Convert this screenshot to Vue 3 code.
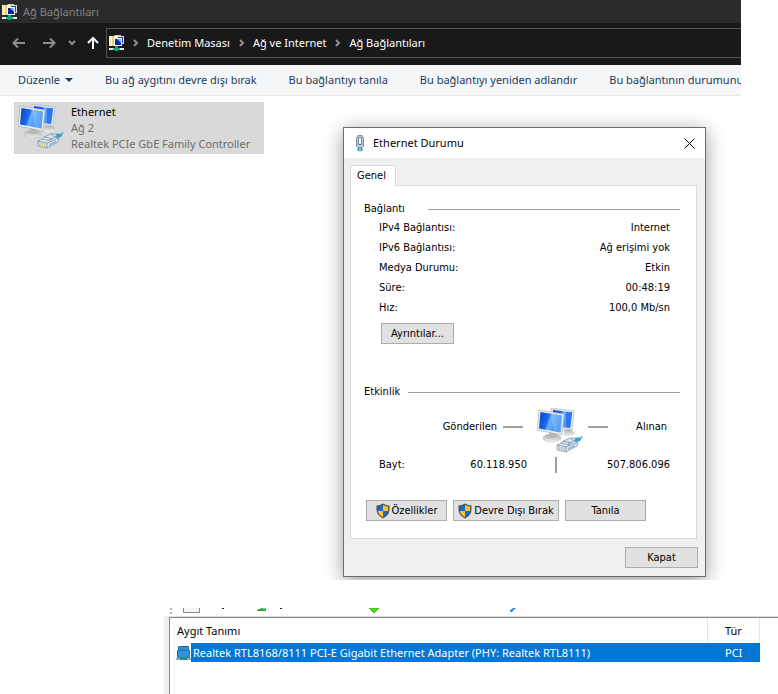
<template>
  <div class="page">
    <!-- network connections window -->
    <section class="explorer">
      <header class="titlebar">
        <svg class="net-icon" viewBox="0 0 16 16"><use href="#net-folder" /></svg>
        <span>Ağ Bağlantıları</span>
      </header>

      <nav class="navbar">
        <button class="nav-btn back" aria-label="Geri">
          <svg width="14" height="12" viewBox="0 0 14 12"><path d="M13 6H1.5M6 1.5L1.5 6L6 10.5" /></svg>
        </button>
        <button class="nav-btn forward" aria-label="İleri">
          <svg width="14" height="12" viewBox="0 0 14 12"><path d="M1 6H12.5M8 1.5L12.5 6L8 10.5" /></svg>
        </button>
        <button class="nav-btn recent" aria-label="Son konumlar">
          <svg width="8" height="6" viewBox="0 0 8 6"><path d="M1 1L4 4L7 1" /></svg>
        </button>
        <button class="nav-btn up" aria-label="Yukarı">
          <svg width="12" height="14" viewBox="0 0 12 14"><path d="M6 13V2M1 7L6 2L11 7" /></svg>
        </button>
        <div class="address">
          <svg class="net-icon" viewBox="0 0 16 16"><use href="#net-folder" /></svg>
          <template v-for="crumb in crumbs" :key="crumb">
            <svg class="sep" viewBox="0 0 6 8"><path d="M1 1L4 4L1 7" /></svg>
            <a href="#" @click.prevent>{{ crumb }}</a>
          </template>
        </div>
      </nav>

      <div class="toolbar">
        <button class="tool organize">
          Düzenle
          <svg width="8" height="4" viewBox="0 0 8 4"><path d="M0 0H8L4 4Z" /></svg>
        </button>
        <button v-for="t in tools" :key="t" class="tool">{{ t }}</button>
      </div>

      <div class="content">
        <div class="adapter">
          <svg class="monitors" viewBox="0 0 46 46"><use href="#monitors" /></svg>
          <div class="adapter-text">
            <div class="name">Ethernet</div>
            <div>Ağ 2</div>
            <div>Realtek PCIe GbE Family Controller</div>
          </div>
        </div>

        <div class="dialog" role="dialog" aria-labelledby="dlg-title">
          <header class="dialog-title">
            <svg class="plug" viewBox="0 0 10 17">
              <path d="M1.500 2.500L3 .5H7L8.500 2.500V11L7 12.500H3L1.500 11Z" fill="#c3cddd" stroke="#7f8ca3" />
              <rect x="3.500" y="2.500" width="3" height="7" fill="#f3f6fa" stroke="#75849b" />
              <path d="M3.500 13V16M6.500 13V16" stroke="#1b9bd0" stroke-width="2" />
              <path d="M5 13V17" stroke="#79d4f2" />
            </svg>
            <h1 id="dlg-title">Ethernet Durumu</h1>
            <button class="close" aria-label="Kapat">
              <svg width="11" height="11" viewBox="0 0 11 11"><path d="M.5 .5L10.5 10.5M10.5 .5L.5 10.5" /></svg>
            </button>
          </header>

          <div class="dialog-body">
            <button class="tab">Genel</button>
            <div class="panel">
              <h2 class="group-title"><span class="wide">Bağlantı</span></h2>
              <dl class="rows">
                <div v-for="row in rows" :key="row.label" class="row">
                  <dt>{{ row.label }}</dt>
                  <dd>{{ row.value }}</dd>
                </div>
              </dl>
              <button class="btn details">Ayrıntılar...</button>

              <h2 class="group-title"><span>Etkinlik</span></h2>
              <div class="activity">
                <div class="sent">Gönderilen<i class="dash"></i></div>
                <svg class="monitors" viewBox="0 0 46 46"><use href="#monitors" /></svg>
                <i class="dash"></i>
                <span class="received">Alınan</span>
              </div>
              <div class="bytes">
                <span>Bayt:</span>
                <span class="sent-bytes">60.118.950</span>
                <i class="bar"></i>
                <span class="received-bytes">507.806.096</span>
              </div>
              <div class="actions">
                <button class="btn props"><svg class="shield" viewBox="0 0 14 16"><use href="#shield" /></svg>Özellikler</button>
                <button class="btn disable"><svg class="shield" viewBox="0 0 14 16"><use href="#shield" /></svg>Devre Dışı Bırak</button>
                <button class="btn diagnose">Tanıla</button>
              </div>
            </div>
            <button class="btn ok">Kapat</button>
          </div>
        </div>
      </div>
    </section>

    <!-- device list -->
    <section class="devices">
      <div class="strip">
        <svg width="360" height="8" viewBox="0 0 360 8">
          <path d="M6 0h2v2h-2zM6 4h2v2h-2z" fill="#b5b5b5" />
          <path d="M19.500 0V4.500H35.500V0" fill="#f5f5f5" stroke="#8a8a8a" />
          <path d="M58 0h2v1h-2zM116 0h2v1h-2z" fill="#222" />
          <path d="M93 2L98 0H102V3H93Z" fill="#2d9e35" />
          <path d="M98 0H102L100 2Z" fill="#8ce08c" />
          <path d="M205 0H215L210 5Z" fill="#55d820" stroke="#3bb512" />
          <path d="M346 4L346 2L349 0H352L348 4Z" fill="#3f8fe0" />
        </svg>
      </div>
      <div class="list">
        <table>
          <thead>
            <tr>
              <th colspan="2" class="col-name">Aygıt Tanımı</th>
              <th class="col-type">Tür</th>
            </tr>
          </thead>
          <tbody>
            <tr v-for="d in devices" :key="d.name">
              <td class="dev-icon">
                <svg width="15" height="16" viewBox="0 0 15 16">
                  <path d="M2.500 1.500H12.500V5.500H2.500Z" fill="#2f8fd0" stroke="#1a6fae" />
                  <path d="M1.500 5.500H13.500V12.500H1.500Z" fill="#2f96dc" stroke="#1b74b5" />
                  <path d="M0 13H15V15H0Z" fill="#7fb3d3" />
                  <path d="M4 12H11V15H4Z" fill="#2b8f80" />
                </svg>
              </td>
              <td class="dev-name">{{ d.name }}</td>
              <td class="dev-type">{{ d.type }}</td>
            </tr>
          </tbody>
        </table>
      </div>
    </section>

    <!-- shared icons -->
    <svg class="defs" width="0" height="0" aria-hidden="true">
      <defs>
        <linearGradient id="screen" x1="0" y1="0" x2="1" y2="0.300">
          <stop offset="0" stop-color="#0a3fc4" />
          <stop offset="0.450" stop-color="#1c6cf0" />
          <stop offset="0.550" stop-color="#6db4fb" />
          <stop offset="1" stop-color="#2f80f2" />
        </linearGradient>
        <linearGradient id="stand" x1="0" y1="0" x2="0" y2="1">
          <stop offset="0" stop-color="#a9a9a9" />
          <stop offset="1" stop-color="#f0f0f0" />
        </linearGradient>
        <symbol id="net-folder" viewBox="0 0 16 16">
          <path d="M0 1H5L6 0H12V11H0Z" fill="#f0cf6c" />
          <path d="M0 1H3V11H0Z" fill="#fbeeb8" />
          <path d="M5 1H9V3H5Z" fill="#fdf3cc" />
          <rect x="8.500" y="1.500" width="6" height="7" fill="#1c3fd0" stroke="#d9dde6" />
          <rect x="5.500" y="3.500" width="7" height="7" fill="#0b24b4" stroke="#f4f5f8" />
          <path d="M8 4H12V8Z" fill="#7db0f8" />
          <path d="M0 13H15V15H0Z" fill="#e3e8ea" />
          <path d="M4 13H11V15H4Z" fill="#14c07a" />
          <path d="M6 11H9V16H6Z" fill="#0fa765" />
        </symbol>
        <symbol id="monitors" viewBox="0 0 46 46">
          <path d="M27 22L33 21L38 25L35 28H27Z" fill="url(#stand)" />
          <path d="M14 0L37 3L35 22L15 20Z" fill="#e2e4e7" stroke="#aeb2b8" stroke-width=".6" />
          <path d="M16 2L35 4.500L33 20L17 18Z" fill="url(#screen)" />
          <path d="M29 4L35 4.500L33 20L29 19Z" fill="#2a77ee" />
          <ellipse cx="15" cy="30" rx="9" ry="4" fill="url(#stand)" stroke="#bcbcbc" stroke-width=".5" />
          <path d="M12 24H20L19 30H12Z" fill="#b9b9b9" />
          <path d="M2 2L27 6L25 27L0 22Z" fill="#eceef0" stroke="#a4a8ae" stroke-width=".6" />
          <path d="M3.500 4L25 7.500L23.500 24.500L2 20.500Z" fill="url(#screen)" />
          <path d="M14 6L25 7.500L23.500 24.500L17 23.500Z" fill="#a4d2ff" opacity=".4" />
          <path d="M34 32Q40 29 46 28L43 33Q40 33 36 36Z" fill="#2ea3d2" />
          <path d="M39 30L46 28L43 30Z" fill="#a8e4f5" />
          <path d="M20 37L24 35L26 33L33 30L39 30L37 33L41 34L40 38L29 44L20 42Z" fill="#dbe6f1" stroke="#7890ad" stroke-width=".7" />
          <path d="M20 37L29 39V44M29 39L41 34M24 35L33 37M26 33L35 35M33 30L37 33L31 36" fill="none" stroke="#6f87a5" stroke-width=".7" />
          <path d="M31 40L38 36.500V38.500L31 42Z" fill="#9db8d6" />
          <path d="M22 38.500V42M24.500 39V43M27 39.500V43" stroke="#c9b85c" />
        </symbol>
        <symbol id="shield" viewBox="0 0 14 16">
          <path d="M7 .5Q4 2.500 .5 2.500V7Q1 12.500 7 15.500Q13 12.500 13.500 7V2.500Q10 2.500 7 .5Z" fill="#52504a" />
          <path d="M7 2Q4.500 3.400 1.800 3.600V8H7Z" fill="#0c6fd0" />
          <path d="M7 2Q9.500 3.400 12.200 3.600V8H7Z" fill="#fdc131" />
          <path d="M1.800 8Q2.700 12 7 14.200V8Z" fill="#fdc131" />
          <path d="M12.200 8Q11.300 12 7 14.200V8Z" fill="#0c6fd0" />
        </symbol>
      </defs>
    </svg>
  </div>
</template>

<script setup>
import { ref } from "vue";

const crumbs = ["Denetim Masası", "Ağ ve Internet", "Ağ Bağlantıları"];
const tools = [
  "Bu ağ aygıtını devre dışı bırak",
  "Bu bağlantıyı tanıla",
  "Bu bağlantıyı yeniden adlandır",
  "Bu bağlantının durumunu",
];
const rows = ref([
  { label: "IPv4 Bağlantısı:", value: "Internet" },
  { label: "IPv6 Bağlantısı:", value: "Ağ erişimi yok" },
  { label: "Medya Durumu:", value: "Etkin" },
  { label: "Süre:", value: "00:48:19" },
  { label: "Hız:", value: "100,0 Mb/sn" },
]);
const devices = ref([
  {
    name: "Realtek RTL8168/8111 PCI-E Gigabit Ethernet Adapter (PHY: Realtek RTL8111)",
    type: "PCI",
  },
]);
</script>

<style>
body {
  margin: 0;
  background: #fff;
}
</style>

<style scoped>
.page {
  font-family: "Noto Sans", "Open Sans", sans-serif;
  font-size: 11px;
  line-height: 16px;
  color: #000;
  overflow: hidden;
}
button {
  font: inherit;
  color: inherit;
  padding: 0;
  border: 0;
  background: none;
  white-space: nowrap;
}
svg {
  display: block;
  flex: none;
}
.defs {
  position: absolute;
}

.explorer {
  margin-right: 37px;
  overflow: hidden;
}
.titlebar {
  display: flex;
  align-items: center;
  gap: 5px;
  height: 23px;
  padding-left: 2px;
  background: #2b2b2b;
  color: #858585;
}
.net-icon {
  width: 16px;
  height: 16px;
}
.navbar {
  display: flex;
  align-items: center;
  height: 30px;
  padding: 5px 0 7px 12px;
  background: #191919;
}
.nav-btn path {
  fill: none;
  stroke: #8f8f8f;
  stroke-width: 2;
}
.forward {
  margin-left: 16px;
}
.recent {
  margin-left: 12px;
}
.up {
  margin: 0 7px 0 11px;
}
.up path {
  stroke: #fff;
}
.address {
  flex: 1;
  display: flex;
  align-items: center;
  gap: 8px;
  height: 28px;
  padding-left: 2px;
  border: 1px solid #535353;
  border-right: 0;
  white-space: nowrap;
}
.address a {
  margin-right: 1px;
  color: #fff;
  text-decoration: none;
}
.sep {
  width: 6px;
  height: 8px;
}
.sep path {
  fill: none;
  stroke: #8f8f8f;
  stroke-width: 2;
}
.toolbar {
  display: flex;
  align-items: center;
  gap: 32px;
  height: 30px;
  padding-left: 18px;
  background: #f5f6f7;
  border-bottom: 1px solid #e5e7ea;
  color: #1e395b;
}
.organize {
  display: flex;
  align-items: center;
  gap: 5px;
}
.organize path {
  fill: #1e395b;
}

.content {
  display: flex;
  justify-content: space-between;
  align-items: flex-start;
  padding: 6px 35px 3px 14px;
}
.adapter {
  display: flex;
  box-sizing: border-box;
  width: 250px;
  height: 52px;
  padding: 2px 4px;
  background: #d9d9d9;
  color: #6d6d6d;
  white-space: nowrap;
}
.monitors {
  width: 46px;
  height: 46px;
}
.adapter-text {
  margin-left: 7px;
}
.name {
  color: #000;
}

.dialog {
  width: 361px;
  margin-top: 25px;
  border: 1px solid #6b6b6b;
  background: #f0f0f0;
  box-shadow: 0 4px 18px rgba(0, 0, 0, 0.4);
}
.dialog-title {
  display: flex;
  align-items: center;
  height: 30px;
  padding: 0 10px 0 11px;
  background: #fff;
}
.plug {
  width: 10px;
  height: 17px;
  fill: none;
}
.dialog-title h1 {
  flex: 1;
  margin: 0 0 0 8px;
  font-size: 11px;
  font-weight: 400;
}
.close path {
  stroke: #000;
}
.dialog-body {
  padding: 7px 7px 8px 6px;
  font-family: "DejaVu Sans Condensed", "DejaVu Sans", sans-serif;
}
.tab {
  display: block;
  position: relative;
  box-sizing: border-box;
  width: 46px;
  height: 21px;
  margin-bottom: -1px;
  padding-right: 3px;
  border: 1px solid #dadada;
  border-bottom: 0;
  background: #fff;
}
.panel {
  margin-right: 1px;
  padding: 15px 16px 17px 13px;
  border: 1px solid #dadada;
  background: #fff;
}
.group-title {
  display: flex;
  align-items: center;
  gap: 8px;
  margin: 0;
  font-size: 11px;
  font-weight: 400;
}
.group-title::after {
  content: "";
  flex: 1;
  height: 1px;
  background: #a0a0a0;
}
.wide {
  width: 56px;
}
.rows {
  margin: 0;
  padding: 1px 10px 0 15px;
}
.row {
  display: flex;
  justify-content: space-between;
  line-height: 20px;
}
.row dd {
  margin: 0;
}
.btn {
  display: flex;
  align-items: center;
  justify-content: center;
  box-sizing: border-box;
  height: 21px;
  border: 1px solid #adadad;
  background: #e1e1e1;
}
.details {
  width: 73px;
  margin: 5px 0 40px 17px;
}
.activity {
  display: flex;
  align-items: center;
  height: 46px;
  margin-top: 8px;
  padding: 0 13px 0 15px;
}
.sent {
  display: flex;
  align-items: center;
  justify-content: flex-end;
  gap: 6px;
  width: 144px;
  margin-right: 14px;
}
.dash {
  width: 20px;
  height: 2px;
  background: #a0a0a0;
}
.activity > .dash {
  margin-left: 5px;
}
.sent,
.received,
.activity > .dash {
  margin-bottom: 8px;
}
.received {
  margin-left: auto;
}
.bytes {
  display: flex;
  align-items: center;
  margin-top: 3px;
  padding: 0 10px 0 15px;
}
.sent-bytes {
  flex: 1;
  text-align: right;
}
.bar {
  width: 2px;
  height: 16px;
  margin-left: 28px;
  background: #a0a0a0;
}
.received-bytes {
  width: 113px;
  text-align: right;
}
.actions {
  display: flex;
  gap: 6px;
  margin-top: 27px;
  padding-left: 2px;
}
.shield {
  width: 14px;
  height: 16px;
  margin-right: 2px;
}
.props,
.diagnose {
  width: 81px;
}
.disable {
  width: 106px;
}
.ok {
  width: 73px;
  margin: 8px 0 0 auto;
}

.devices {
  margin: 28px 0 0 164px;
}
.strip {
  height: 8px;
}
.list {
  display: flex;
  height: 77px;
  border-top: 1px solid #e0e0e0;
  border-left: 5px solid #f0f0f0;
}
.list::before {
  content: "";
  width: 1px;
  background: #828790;
}
.list::after {
  content: "";
  flex: 1;
  height: 1px;
  background: #828790;
}
.list table {
  width: 590px;
  height: 45px;
  padding-left: 6px;
  border-collapse: separate;
  border-spacing: 0;
  border-top: 1px solid #828790;
}
.list th,
.list td {
  padding: 0;
  font-weight: 400;
  text-align: left;
}
.list th {
  height: 25px;
  border-right: 1px solid #e5e5e5;
}
.list .col-name {
  padding-left: 1px;
}
.list .col-type,
.list .dev-type {
  width: 34px;
  padding-left: 17px;
}
.list .dev-icon {
  width: 15px;
}
.list .dev-name,
.list .dev-type {
  height: 19px;
  background: #0078d7;
  color: #fff;
}
.list .dev-name {
  padding-left: 2px;
}
</style>
